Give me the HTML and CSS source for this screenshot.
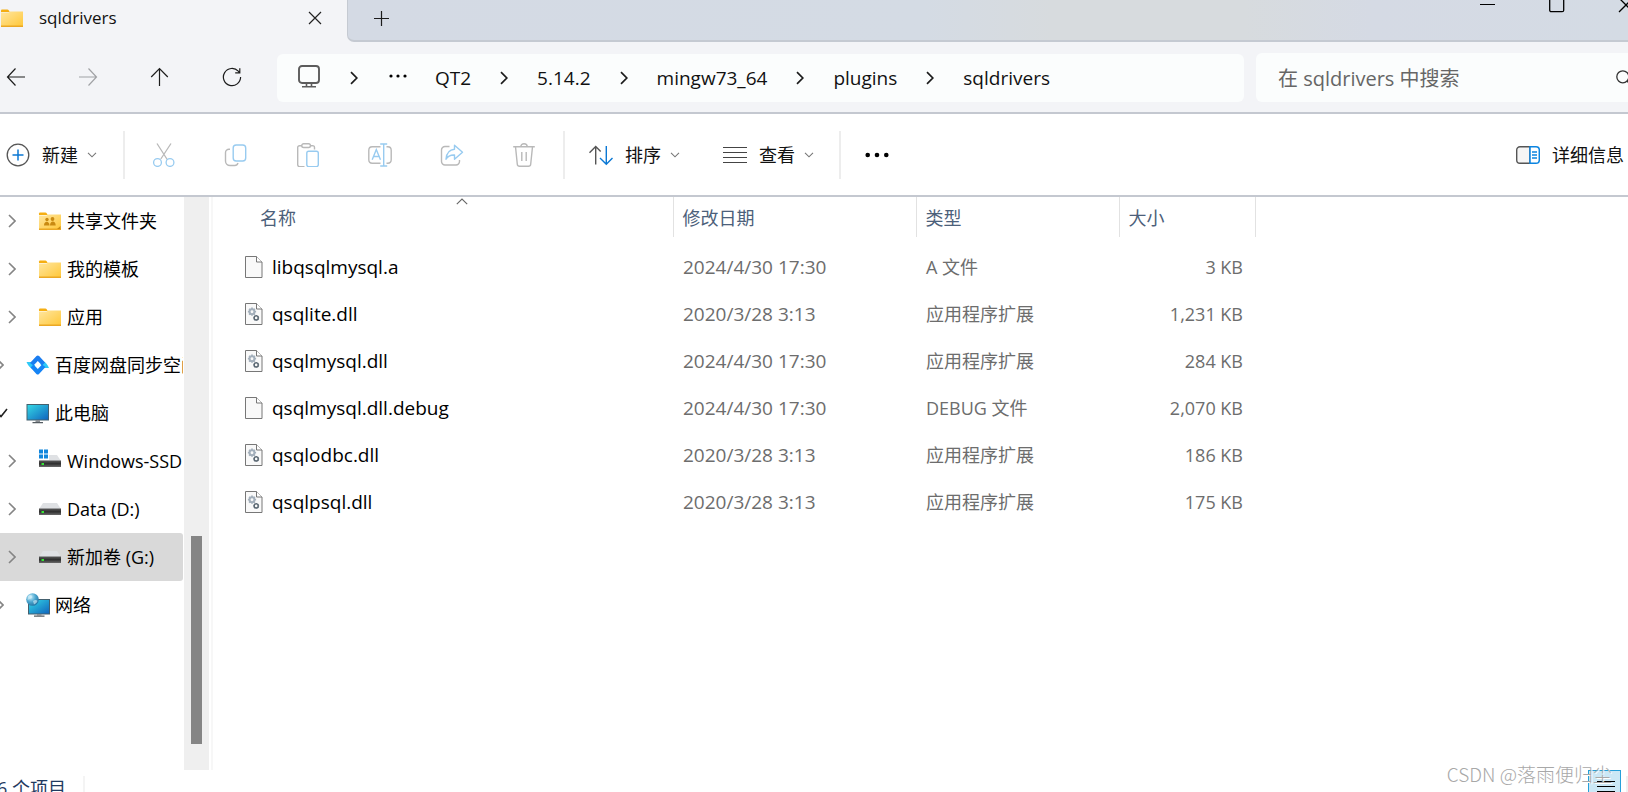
FILE: index.html
```html
<!DOCTYPE html>
<html lang="zh-CN">
<head>
<meta charset="utf-8">
<title>sqldrivers</title>
<link rel="stylesheet" href="styles.css">
</head>
<body>
<svg class="defs" aria-hidden="true">
  <defs>
    <linearGradient id="gFolder" x1="0" y1="0" x2="1" y2="1"><stop offset="0" stop-color="#ffe6a0"/><stop offset="1" stop-color="#ffc83a"/></linearGradient>
    <linearGradient id="gScreen" x1="0" y1="0" x2="1" y2="1"><stop offset="0" stop-color="#35dbe6"/><stop offset="1" stop-color="#0f62bd"/></linearGradient>
    <linearGradient id="gDrive" x1="0" y1="0" x2="0" y2="1"><stop offset="0" stop-color="#5a5a5a"/><stop offset=".5" stop-color="#2e2e2e"/><stop offset="1" stop-color="#6b6b6b"/></linearGradient>
    <radialGradient id="gGlobe" cx=".35" cy=".3" r=".8"><stop offset="0" stop-color="#c4ecfa"/><stop offset=".5" stop-color="#4ba6cf"/><stop offset="1" stop-color="#1c6798"/></radialGradient>
    <symbol id="folder" viewBox="0 0 24 24"><path d="M1 4.500q0-1 1-1h5.500q.6 0 1 .6l1.200 1.900H1z" fill="#f5ae12"/><path d="M1 6.500h7.500l1.500-1h13V20H1z" fill="url(#gFolder)"/><path d="M1 19.500h22V21H1z" fill="#eba824"/></symbol>
    <symbol id="drive" viewBox="0 0 24 24"><path d="M5 6h14l4 6H1z" fill="#dfe1e4"/><path d="M1 11.500h22V18H1z" fill="url(#gDrive)"/><path d="M3.500 14h2.500v2h-2.500z" fill="#35e635"/></symbol>
    <symbol id="doc" viewBox="0 0 18 22"><path d="M.5.5h11l5.500 5.500v15.500H.5z" fill="#f9f9f9" stroke="#777"/><path d="M11.500.5V6H17" fill="#fff" stroke="#777"/></symbol>
    <symbol id="dll" viewBox="0 0 18 22"><use href="#doc" width="18" height="22"/><circle cx="7" cy="8.700" r="2.400" fill="none" stroke="#a3afbb" stroke-width="1.900"/><path d="M7 4.600v1.500M7 11.300v1.500M2.900 8.700h1.500M9.600 8.700h1.500M4.100 5.800l1 1M8.900 10.600l1 1M9.900 5.800l-1 1M5.100 10.600l-1 1" stroke="#a3afbb" stroke-width="1.700"/><circle cx="11.200" cy="14.900" r="2" fill="none" stroke="#5b6873" stroke-width="1.400"/><path d="M11.200 12v1M11.200 16.800v1M8.300 14.900h1M13.100 14.900h1M9.100 12.900l.8.8M12.500 16.200l.8.8M13.300 12.900l-.8.8M9.900 16.200l-.8.8" stroke="#5b6873" stroke-width="1.300"/></symbol>
    <symbol id="tree" viewBox="0 0 8 14"><path d="M1 1l6 6-6 6" fill="none" stroke="#858585" stroke-width="1.600"/></symbol>
    <symbol id="crumb" viewBox="0 0 8 14"><path d="M1 1.200l5.800 5.800L1 12.800" fill="none" stroke="#1c1c1c" stroke-width="1.700"/></symbol>
    <symbol id="down" viewBox="0 0 10 6"><path d="M1 .8l4 4 4-4" fill="none" stroke="#777" stroke-width="1.100"/></symbol>
  </defs>
</svg>
<div class="window">
  <header class="titlebar">
    <div class="tab">
      <svg class="i24"><use href="#folder"/></svg>
      <span class="tab-title">sqldrivers</span>
      <button class="plain" aria-label="关闭标签页"><svg width="14" height="14" viewBox="0 0 14 14"><path d="M1 1l12 12M13 1L1 13" stroke="#222" stroke-width="1.200"/></svg></button>
    </div>
    <div class="tabstrip">
      <button class="plain" aria-label="新建标签页"><svg width="16" height="16" viewBox="0 0 16 16"><path d="M7.500 0v15M0 7.500h15" stroke="#1c1c1c" stroke-width="1.200"/></svg></button>
      <div class="controls">
        <button class="plain" aria-label="最小化"><svg width="16" height="16" viewBox="0 0 16 16"><path d="M0 7.500h15" stroke="#000"/></svg></button>
        <button class="plain" aria-label="最大化"><svg width="16" height="16" viewBox="0 0 16 16"><rect x=".7" y=".7" width="14" height="14" rx="1.500" fill="none" stroke="#000" stroke-width="1.300"/></svg></button>
        <button class="plain" aria-label="关闭"><svg width="16" height="16" viewBox="0 0 16 16"><path d="M1 1l14 14M15 1L1 15" stroke="#000" stroke-width="1.300"/></svg></button>
      </div>
    </div>
  </header>

  <nav class="navbar" aria-label="导航">
    <button class="plain nav-btn" aria-label="后退"><svg width="20" height="20" viewBox="0 0 20 20"><path d="M19 10H1.500M9.500 1.500L1.500 10l8 8.500" fill="none" stroke="#1c1c1c" stroke-width="1.200"/></svg></button>
    <button class="plain nav-btn" aria-label="前进"><svg width="20" height="20" viewBox="0 0 20 20"><path d="M1 10h17.500M10.500 1.500l8 8.500-8 8.500" fill="none" stroke="#a0a2a5" stroke-width="1.200"/></svg></button>
    <button class="plain nav-btn" aria-label="向上"><svg width="20" height="20" viewBox="0 0 20 20"><path d="M9.500 19V1.500M1.200 10l8.300-8.500L17.800 10" fill="none" stroke="#1c1c1c" stroke-width="1.200"/></svg></button>
    <button class="plain nav-btn" aria-label="刷新"><svg width="20" height="20" viewBox="0 0 20 20"><path d="M18.600 10a8.600 8.600 0 1 1-2.300-5.800l1.200 1.300M17.800 1.200v4.600h-4.600" fill="none" stroke="#1c1c1c" stroke-width="1.200"/></svg></button>
    <div class="address">
      <svg class="pc" width="22" height="23" viewBox="0 0 22 23"><rect x="1" y="1" width="20" height="17" rx="3" fill="none" stroke="#5c5c5c" stroke-width="1.900"/><path d="M8.500 18v3.500M13.500 18v3.500M4 21.700h14" stroke="#5c5c5c" stroke-width="1.600"/></svg>
      <svg class="chev"><use href="#crumb"/></svg>
      <button class="plain more" aria-label="更多"><svg width="18" height="4" viewBox="0 0 18 4"><circle cx="2" cy="2" r="1.600"/><circle cx="9" cy="2" r="1.600"/><circle cx="16" cy="2" r="1.600"/></svg></button>
      <a href="#">QT2</a><svg class="chev"><use href="#crumb"/></svg>
      <a href="#">5.14.2</a><svg class="chev"><use href="#crumb"/></svg>
      <a href="#">mingw73_64</a><svg class="chev"><use href="#crumb"/></svg>
      <a href="#">plugins</a><svg class="chev"><use href="#crumb"/></svg>
      <a href="#">sqldrivers</a>
    </div>
    <label class="search">
      <input type="text" placeholder="在 sqldrivers 中搜索" aria-label="搜索">
      <svg width="16" height="16" viewBox="0 0 16 16"><circle cx="6.800" cy="6.800" r="6" fill="none" stroke="#333" stroke-width="1.300"/><path d="M11 11l4.500 4.500" stroke="#333" stroke-width="1.300"/></svg>
    </label>
  </nav>

  <div class="toolbar" role="toolbar">
    <button class="plain cmd new"><svg width="24" height="24" viewBox="0 0 24 24"><circle cx="12" cy="12" r="10.800" fill="none" stroke="#555" stroke-width="1.300"/><path d="M12 6.500v11M6.500 12h11" stroke="#0b78d4" stroke-width="1.500"/></svg><span>新建</span><svg class="down"><use href="#down"/></svg></button>
    <span class="sep"></span>
    <div class="icons">
      <button class="plain icon" aria-label="剪切" disabled><svg class="i24" viewBox="0 0 24 24" fill="none" stroke-width="1.300"><path d="M5 .5l10.200 16M19 .5L8.800 16" stroke="#b9b9b9"/><circle cx="5.500" cy="19.500" r="3.900" stroke="#98cbf0"/><circle cx="18" cy="19.500" r="3.900" stroke="#98cbf0"/></svg></button>
      <button class="plain icon" aria-label="复制" disabled><svg class="i24" viewBox="0 0 24 24" fill="none" stroke-width="1.400"><path d="M6 6.200H5a3.500 3.500 0 0 0-3.500 3.500V18A4.500 4.500 0 0 0 6 22.500h4.500a3.500 3.500 0 0 0 3.500-2.500" stroke="#b9b9b9"/><rect x="9.200" y="2" width="12.500" height="16" rx="3" stroke="#98cbf0"/></svg></button>
      <button class="plain icon" aria-label="粘贴" disabled><svg class="i24" viewBox="0 0 24 24" fill="none" stroke-width="1.400"><path d="M6 2.700H3.500A1.800 1.800 0 0 0 1.700 4.500v17.300a1.800 1.800 0 0 0 1.800 1.800h5M14 2.700h2.300A1.800 1.800 0 0 1 18.500 4.500v2" stroke="#b9b9b9"/><rect x="5.800" y=".8" width="8.600" height="3.700" rx="1.800" stroke="#b9b9b9"/><rect x="10.800" y="8.300" width="11.500" height="15.300" rx="1.800" stroke="#98cbf0"/></svg></button>
      <button class="plain icon" aria-label="重命名" disabled><svg class="i24" viewBox="0 0 24 24" fill="none" stroke-width="1.400"><path d="M12.500 3.700H4.200A3.500 3.500 0 0 0 .8 7.200v9.600a3.500 3.500 0 0 0 3.400 3.500h8.300M18.500 3.700h1.300a3.500 3.500 0 0 1 3.400 3.500v9.600a3.500 3.500 0 0 1-3.400 3.500h-1.300" stroke="#b9b9b9"/><path d="M4.200 16.700L8.300 6.500l4.200 10.200M5.500 13.500h5.600M15.700 1v22M12.200 1h7M12.200 23h7" stroke="#98cbf0"/></svg></button>
      <button class="plain icon" aria-label="共享" disabled><svg class="i24" viewBox="0 0 24 24" fill="none" stroke-width="1.400"><path d="M9.500 3.500H5A3.500 3.500 0 0 0 1.500 7v11.500A3.500 3.500 0 0 0 5 22h11a3.500 3.500 0 0 0 3.500-3.500V17" stroke="#b9b9b9"/><path d="M14.500 2.200l8 7-8 7V12C10 11.800 7.500 13.500 6 16.200 6.500 10.500 9.500 6.700 14.500 6.300z" stroke="#98cbf0" stroke-linejoin="round"/></svg></button>
      <button class="plain icon" aria-label="删除" disabled><svg class="i24" viewBox="0 0 24 24" fill="none" stroke="#b9b9b9" stroke-width="1.400"><path d="M1.200 3.700h21.600M3.500 3.700l1.800 17.500a2.300 2.300 0 0 0 2.300 2.100h8.800a2.300 2.300 0 0 0 2.300-2.100l1.800-17.500M8.800 3.500a3.200 2.800 0 0 1 6.400 0M9.800 9v9M14.200 9v9"/></svg></button>
    </div>
    <span class="sep"></span>
    <button class="plain cmd sort"><svg class="i24" viewBox="0 0 24 24" fill="none" stroke-width="1.400"><path d="M6.700 21.500V3.500M.5 9.700l6.200-6.200 5 5" stroke="#555"/><path d="M17.300 3v18M11 15l6.300 6.200 6.200-6.200" stroke="#0b78d4"/></svg><span>排序</span><svg class="down"><use href="#down"/></svg></button>
    <button class="plain cmd view"><svg class="i24" viewBox="0 0 24 24"><path d="M0 4.500h24M0 9.500h24M0 14.500h24M0 19.500h24" stroke="#444" stroke-width="1.200"/></svg><span>查看</span><svg class="down"><use href="#down"/></svg></button>
    <span class="sep"></span>
    <button class="plain dots" aria-label="查看更多"><svg width="24" height="6" viewBox="0 0 24 6"><circle cx="2.700" cy="3" r="2.300"/><circle cx="12" cy="3" r="2.300"/><circle cx="21.300" cy="3" r="2.300"/></svg></button>
    <button class="plain cmd details"><svg class="i24" viewBox="0 0 24 24"><path d="M14 3.700H4A3.300 3.300 0 0 0 .7 7v10A3.300 3.300 0 0 0 4 20.300h10z" fill="#f5f5f5" stroke="#555" stroke-width="1.400"/><path d="M14 3.700h6A3.300 3.300 0 0 1 23.300 7v10a3.300 3.300 0 0 1-3.300 3.300h-6zM16 9h5M16 12h5M16 15h5" fill="#fff" stroke="#0b84e0" stroke-width="1.500"/></svg><span>详细信息</span></button>
  </div>

  <div class="body">
    <aside class="sidebar">
      <ul class="tree">
        <li><a href="#" class="node child"><svg class="chev"><use href="#tree"/></svg><svg class="i24" viewBox="0 0 24 24"><use href="#folder"/><g fill="#c98a12"><circle cx="9" cy="10.500" r="1.700"/><circle cx="14.500" cy="10" r="1.900"/><path d="M6 16.500c0-5 5.500-5 5.500 0zM12 16.500c0-5.500 5.700-5.500 5.700 0zM22.500 17v3h-3.500z"/></g></svg><span>共享文件夹</span></a></li>
        <li><a href="#" class="node child"><svg class="chev"><use href="#tree"/></svg><svg class="i24"><use href="#folder"/></svg><span>我的模板</span></a></li>
        <li><a href="#" class="node child"><svg class="chev"><use href="#tree"/></svg><svg class="i24"><use href="#folder"/></svg><span>应用</span></a></li>
        <li><a href="#" class="node"><svg class="chev"><use href="#tree"/></svg><svg class="i24" viewBox="0 0 24 24"><path d="M.5 9h4.500l4 3.500-2.500 3.500q-4-2-6-7z" fill="#2fc9f7"/><path d="M23 15h-4.500l-4-3.500 2.500-3.500q4 2 6 7z" fill="#2fc9f7"/><path d="M4 10l6.500-7q1.300-1.200 2.600 0L19 9.500l-3 3-4.200-4.500-4.300 4.500z" fill="#1b7df0"/><path d="M19.500 14l-6.500 7q-1.300 1.200-2.600 0L4.500 14.500l3-3 4.300 4.500 4.200-4.500z" fill="#1684f5"/></svg><span>百度网盘同步空间</span></a></li>
        <li><a href="#" class="node"><svg class="open" viewBox="0 0 12 14"><path d="M1 6.500l4 4L11 3" fill="none" stroke="#222" stroke-width="1.600"/></svg><svg class="i24" viewBox="0 0 24 24"><rect x="1" y="3.500" width="21.500" height="15.500" fill="url(#gScreen)" stroke="#44606e"/><path d="M9.500 19H14v2H9.500z" fill="#8a8f94"/><path d="M6.500 21H17v1.300H6.500z" fill="#555c62"/></svg><span>此电脑</span></a></li>
        <li><a href="#" class="node child"><svg class="chev"><use href="#tree"/></svg><svg class="i24" viewBox="0 0 24 24"><use href="#drive"/><path d="M0 0h11v11H0z" fill="#fff"/><path d="M1 .5h4v4H1zM6 .5h4v4H6zM1 5.500h4v4H1zM6 5.500h4v4H6z" fill="#1186dc"/></svg><span>Windows-SSD (C:)</span></a></li>
        <li><a href="#" class="node child"><svg class="chev"><use href="#tree"/></svg><svg class="i24"><use href="#drive"/></svg><span>Data (D:)</span></a></li>
        <li><a href="#" class="node child selected"><svg class="chev"><use href="#tree"/></svg><svg class="i24"><use href="#drive"/></svg><span>新加卷 (G:)</span></a></li>
        <li><a href="#" class="node"><svg class="chev"><use href="#tree"/></svg><svg class="i24" viewBox="0 0 24 24"><rect x="2.500" y="6.500" width="21" height="14.500" fill="url(#gScreen)" stroke="#44606e"/><path d="M11 21h4.500v1.500H11z" fill="#8a8f94"/><path d="M8 22.500h10.500v1.300H8z" fill="#555c62"/><circle cx="6.500" cy="6.500" r="6.300" fill="url(#gGlobe)"/><path d="M2 3q3-2 4 0t-2 3-2.500 1M7 8q3-2 4.500 0-1 3-3.500 3.500" fill="#d9f2fa" opacity=".6"/></svg><span>网络</span></a></li>
      </ul>
      <div class="scrollbar"><div class="thumb"></div></div>
    </aside>
    <main class="files">
      <table>
        <colgroup><col class="c-name"><col class="c-date"><col class="c-type"><col class="c-size"></colgroup>
        <thead><tr>
          <th class="name">名称<svg class="sort-mark" width="12" height="7" viewBox="0 0 12 7"><path d="M.8 6.200L6 1l5.200 5.200" fill="none" stroke="#666" stroke-width="1.100"/></svg></th><th>修改日期</th><th>类型</th><th>大小</th>
        </tr></thead>
        <tbody>
          <tr><td class="name"><svg class="file"><use href="#doc"/></svg>libqsqlmysql.a</td><td class="date">2024/4/30 17:30</td><td>A 文件</td><td class="size">3 KB</td></tr>
          <tr><td class="name"><svg class="file"><use href="#dll"/></svg>qsqlite.dll</td><td class="date">2020/3/28 3:13</td><td>应用程序扩展</td><td class="size">1,231 KB</td></tr>
          <tr><td class="name"><svg class="file"><use href="#dll"/></svg>qsqlmysql.dll</td><td class="date">2024/4/30 17:30</td><td>应用程序扩展</td><td class="size">284 KB</td></tr>
          <tr><td class="name"><svg class="file"><use href="#doc"/></svg>qsqlmysql.dll.debug</td><td class="date">2024/4/30 17:30</td><td>DEBUG 文件</td><td class="size">2,070 KB</td></tr>
          <tr><td class="name"><svg class="file"><use href="#dll"/></svg>qsqlodbc.dll</td><td class="date">2020/3/28 3:13</td><td>应用程序扩展</td><td class="size">186 KB</td></tr>
          <tr><td class="name"><svg class="file"><use href="#dll"/></svg>qsqlpsql.dll</td><td class="date">2020/3/28 3:13</td><td>应用程序扩展</td><td class="size">175 KB</td></tr>
        </tbody>
      </table>
    </main>
  </div>

  <footer class="status">
    <span class="count">6 个项目</span>
    <button class="list-view" aria-label="详细信息视图"><svg width="18" height="12" viewBox="0 0 18 12"><path d="M0 .5h18M0 5.500h18M0 10.500h18" stroke="#000"/></svg></button>
    <span class="next-view"></span>
  </footer>
  <div class="watermark">CSDN @落雨便归尘</div>
</div>
</body>
</html>
```
FILE: styles.css
```css
* { box-sizing: border-box; }
body {
  margin: 0;
  font-family: "Open Sans", "Noto Sans CJK SC", sans-serif;
  font-size: 18px;
  line-height: 24px;
  color: #111;
  background: #fff;
}
a { color: inherit; text-decoration: none; }
svg { flex: none; display: block; }
.defs { position: absolute; width: 0; height: 0; }
.plain {
  border: 0;
  padding: 0;
  background: none;
  font: inherit;
  color: inherit;
  display: flex;
  align-items: center;
  justify-content: center;
}
.i24 { width: 24px; height: 24px; }

.window {
  position: relative;
  height: 100vh;
  overflow: hidden;
  display: flex;
  flex-direction: column;
}

.titlebar { display: flex; height: 42px; flex: none; background: #f3f4f7; }
.tab {
  display: flex;
  align-items: center;
  width: 347px;
  padding: 0 25px 6px 0;
}
.tab-title { flex: 1; margin-left: 15px; font-size: 17px; font-weight: 500; }
.tabstrip {
  flex: 1;
  display: flex;
  justify-content: space-between;
  padding: 11px 0 0 26px;
  background: linear-gradient(90deg, #d4dae4 0, #d4dbe4 45%, #d7dbde 55%, #d7dbde 70%, #d5dae4 80%, #d4dbe4 100%);
  border: solid #c5cad2;
  border-width: 0 0 2px 1px;
  border-bottom-left-radius: 7px;
  align-items: flex-start;
}
.controls { display: flex; gap: 53px; margin: -14px -6px 0 0; }

.navbar {
  display: flex;
  align-items: center;
  flex: none;
  height: 72px;
  margin-left: -20px;
  background: #f3f4f7;
  border-bottom: 2px solid #c4c8d0;
  overflow: hidden;
}
.navbar .nav-btn { width: 72px; height: 48px; }
.address {
  flex: 1;
  display: flex;
  align-items: center;
  height: 48px;
  margin: 2px 12px 0 9px;
  padding: 0 21px;
  border-radius: 6px;
  background: #fbfdfd;
  font-size: 19px;
}
.pc { margin-bottom: 4px; }
.address .chev { width: 8px; height: 14px; margin: 0 29px; }
.address .more { margin: 0 28px 4px 2px; }
.address .pc + .chev { margin: 0 29px 0 30px; }
.search {
  display: flex;
  align-items: center;
  width: 392px;
  height: 49px;
  margin: 1px -20px 0 0;
  padding: 0 16px 0 22px;
  border-radius: 6px;
  background: #fbfdfd;
}
.search input {
  flex: 1;
  min-width: 0;
  height: 28px;
  border: 0;
  padding: 2px 0 0;
  background: none;
  font: inherit;
  font-size: 20px;
  outline: 0;
}
.search input::placeholder { color: #666; opacity: 1; }

.toolbar {
  display: flex;
  align-items: center;
  flex: none;
  height: 83px;
  padding: 0 4px 0 6px;
  border-bottom: 2px solid #c4c8d0;
}
.cmd { gap: 12px; }
.down { width: 10px; height: 6px; margin-left: -3px; }
.sep { width: 2px; height: 48px; background: #ededed; }
.new { margin-right: 26px; }
.icons { display: flex; margin: 0 3px 0 3px; }
.icons .icon { width: 72px; height: 48px; }
.sort { margin-left: 24px; margin-right: 43px; }
.view { margin-right: 25px; }
.dots { margin-left: 24px; }
.details { margin-left: auto; }

.body { flex: 1; display: flex; min-height: 0; }
.sidebar { display: flex; width: 213px; flex: none; border-right: 2px solid #f7f7f7; }
.tree {
  flex: 1;
  margin: 0;
  padding: 0;
  list-style: none;
  overflow: hidden;
  color: #000;
}
.node {
  display: flex;
  align-items: center;
  height: 48px;
  margin: 0 1px 0 -12px;
  padding-left: 8px;
  border-radius: 3px;
  white-space: nowrap;
  overflow: hidden;
}
.child { padding-left: 20px; }
.node .chev { width: 8px; height: 14px; margin-right: 22px; }
.node .open { width: 12px; height: 14px; margin-right: 18px; }
.node span { margin-left: 5px; }
.selected { background: #d9d9d9; }
.scrollbar {
  width: 25px;
  margin-right: 2px;
  padding: 339px 7px 26px;
  background: #efefef;
}
.thumb { height: 100%; background: #858585; }

.files { flex: 1; overflow: hidden; }
table { border-collapse: collapse; table-layout: fixed; width: 1042px; }
.c-name { width: 460px; }
.c-date { width: 243px; }
.c-type { width: 203px; }
.c-size { width: 136px; }
th {
  position: relative;
  height: 40px;
  padding: 2px 0 0 9px;
  border-right: 1px solid #e2e2e2;
  font-weight: 400;
  text-align: left;
  color: #4c607a;
}
th.name { padding-left: 47px; }
.sort-mark { position: absolute; left: 243px; top: 1px; }
td { height: 47px; padding: 0 0 0 10px; color: #6d6d6d; }
tbody tr:first-child td { height: 53px; padding-top: 6px; }
td.name { color: #000; padding-left: 32px; font-size: 19px; }
td.date { font-size: 19px; }
td.size { text-align: right; padding-right: 12px; }
.file { display: inline-block; width: 18px; height: 22px; margin-right: 9px; vertical-align: -4px; }

.status {
  display: flex;
  flex: none;
  height: 22px;
  overflow: hidden;
  color: #1f3a5f;
}
.count {
  margin: 6px auto 0 -3px;
  padding-right: 17px;
  border-right: 2px solid #f4f4f4;
}
.list-view {
  width: 33px;
  height: 34px;
  padding: 10px 0 0 8px;
  border: 1px solid #26a0da;
  background: #cbe8f6;
  display: flex;
  align-items: flex-start;
}
.next-view { width: 2px; margin: 6px 0 0 5px; background: #f0f0f0; }
.watermark {
  position: absolute;
  right: 16px;
  bottom: 6px;
  font-family: "Noto Sans CJK SC", sans-serif;
  font-size: 19px;
  font-weight: 300;
  color: #a8a8a8;
  text-shadow: 1px 1px 0 #fff;
}
```
